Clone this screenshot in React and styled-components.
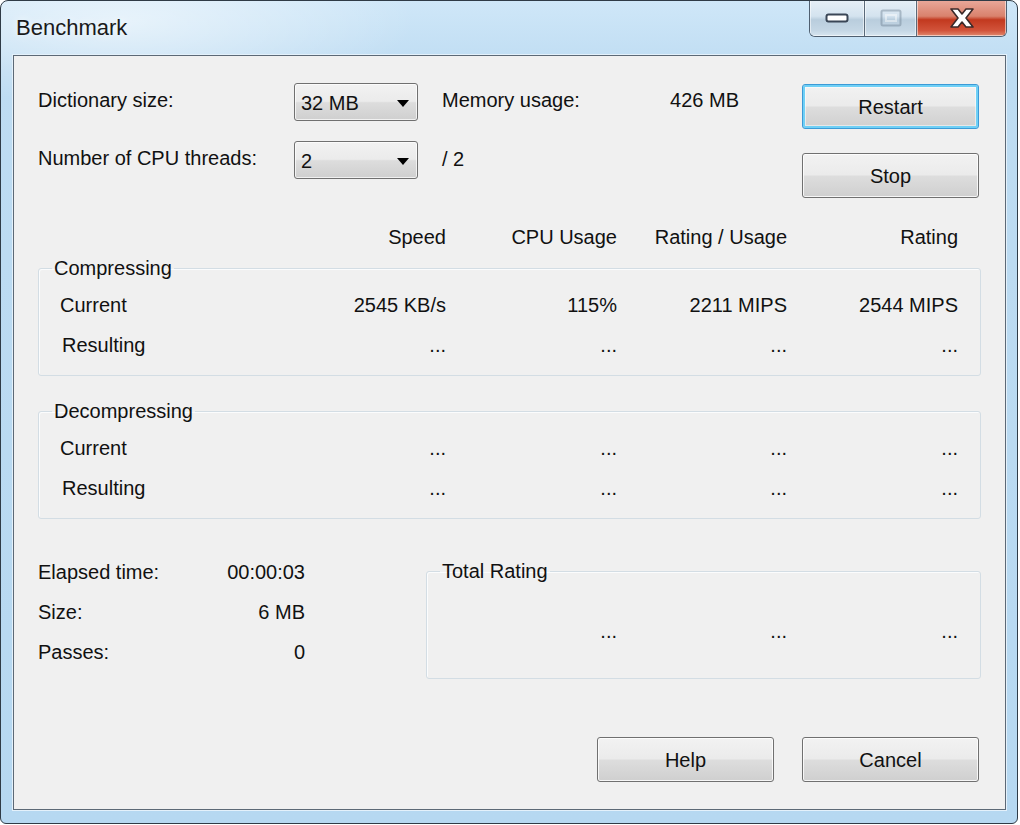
import React from 'react'
import styled, { createGlobalStyle, css } from 'styled-components'

const GlobalStyle = createGlobalStyle`
  html, body {
    margin: 0;
    padding: 0;
    background: #ffffff;
  }
  body {
    font-family: "Liberation Sans", Arial, sans-serif;
    font-size: 20px;
    color: #111;
  }
`

const Window = styled.div`
  box-sizing: border-box;
  width: 1018px;
  height: 824px;
  border: 1px solid #2f3b46;
  border-radius: 8px 8px 6px 6px;
  background:
    radial-gradient(ellipse 420px 120px at 120px 20px, rgba(255,255,255,0.55), rgba(255,255,255,0) 70%),
    linear-gradient(to bottom, #cfe7f8 0, #bedcf2 70px, #b6d8f1 100%);
  display: flex;
  flex-direction: column;
  padding: 0 11px 13px 12px;
  overflow: hidden;
`

const TitleBar = styled.div`
  height: 54px;
  display: flex;
  align-items: flex-start;
  flex-shrink: 0;
`

const Title = styled.div`
  font-size: 22px;
  line-height: 26px;
  margin-top: 14px;
  margin-left: 3px;
  color: #1a1a1a;
  text-shadow: 0 0 8px rgba(255,255,255,0.9);
`

const CaptionGroup = styled.div`
  margin-left: auto;
  margin-right: -1px;
  margin-top: -1px;
  display: flex;
  height: 36px;
  border: 1px solid #4f5f70;
  border-top: none;
  border-radius: 0 0 6px 6px;
  overflow: hidden;
`

const CaptionButton = styled.div`
  width: ${p => p.$w}px;
  display: flex;
  align-items: center;
  justify-content: center;
  border-left: ${p => (p.$first ? 'none' : '1px solid #5a6a7a')};
  box-shadow: inset 0 0 0 1px rgba(255,255,255,0.55);
  ${p => p.$close
    ? css`
      background: linear-gradient(to bottom, #e9a99b 0, #d9826d 45%, #c2391f 55%, #d2543b 85%, #e08a6f 100%);
    `
    : css`
      background: linear-gradient(to bottom, #e6eff7 0, #d4e3ef 45%, #b9cddd 55%, #c5d7e5 85%, #d8e6f0 100%);
    `}
`

const Client = styled.div`
  flex: 1;
  box-sizing: border-box;
  background: #f0f0f0;
  border: 1px solid #5c6976;
  box-shadow: 0 0 0 1px #e4f1fb;
  padding: 27px 24px 27px 24px;
  display: flex;
  flex-direction: column;
`

const TopRow = styled.div`
  display: flex;
  align-items: flex-start;
`

const SettingsGrid = styled.div`
  display: grid;
  grid-template-columns: 256px 124px 321px;
  row-gap: 20px;
  grid-auto-rows: 38px;
  align-items: center;
`

const Label = styled.div`
  line-height: 24px;
  white-space: nowrap;
  margin-top: -4px;
`

const MemCell = styled.div`
  display: flex;
  justify-content: space-between;
  padding-left: 24px;
  line-height: 24px;
  margin-top: -4px;
`

const ThreadCell = styled.div`
  padding-left: 24px;
  line-height: 24px;
  margin-top: -3px;
`

const Combo = styled.div`
  box-sizing: border-box;
  height: 38px;
  border: 1px solid #707070;
  border-radius: 3px;
  background: linear-gradient(to bottom, #f2f2f2 0, #ebebeb 48%, #dddddd 52%, #cfcfcf 100%);
  box-shadow: inset 0 0 0 1px rgba(255,255,255,0.7);
  display: flex;
  align-items: center;
  padding: 2px 8px 0 6px;
  line-height: 24px;
`

const ComboText = styled.span`
  flex: 1;
`

const Arrow = styled.span`
  width: 0;
  height: 0;
  border-left: 6px solid transparent;
  border-right: 6px solid transparent;
  border-top: 7px solid #000;
`

const ButtonColumn = styled.div`
  margin-left: auto;
  margin-right: 2px;
  margin-top: 1px;
  display: flex;
  flex-direction: column;
  gap: 24px;
`

const Button = styled.div`
  box-sizing: border-box;
  width: 177px;
  height: 45px;
  border-radius: 3px;
  display: flex;
  align-items: center;
  justify-content: center;
  line-height: 24px;
  border: 1px solid ${p => (p.$focused ? '#3c9ad6' : '#707070')};
  background: linear-gradient(to bottom, #f2f2f2 0, #ebebeb 48%, #dddddd 52%, #cfcfcf 100%);
  box-shadow: ${p => p.$focused
    ? 'inset 0 0 0 2px #6fd0f6, inset 0 0 0 3px rgba(255,255,255,0.5)'
    : 'inset 0 0 0 1px rgba(255,255,255,0.8)'};
`

const ColumnGrid = styled.div`
  display: grid;
  grid-template-columns: ${p => p.$first}px 171px 171px 170px 171px;
  line-height: 24px;
  row-gap: 16px;
`

const HeaderRow = styled(ColumnGrid)`
  margin-top: 27px;
`

const Cell = styled.div`
  text-align: ${p => (p.$left ? 'left' : 'right')};
  white-space: nowrap;
  padding-left: ${p => p.$indent || 0}px;
`

const GroupBox = styled.fieldset`
  margin: ${p => p.$mt || 0}px 0 0 ${p => (p.$push ? 'auto' : '0')};
  padding: ${p => p.$pt}px 22px ${p => p.$pb}px 21px;
  border: 1px solid #d3dde4;
  border-radius: 3px;
  box-shadow: inset 1px 1px 0 #fbfcfd;
  min-width: 0;
  box-sizing: border-box;
  width: ${p => (p.$w ? `${p.$w}px` : 'auto')};
`

const Legend = styled.legend`
  padding: 0 2px;
  margin-left: -8px;
  line-height: 24px;
`

const BottomRow = styled.div`
  display: flex;
  align-items: flex-start;
  margin-top: 40px;
`

const StatsGrid = styled.div`
  width: 267px;
  margin-top: 1px;
  display: grid;
  grid-template-columns: 1fr auto;
  row-gap: 16px;
  line-height: 24px;
`

const TotalGrid = styled.div`
  display: grid;
  grid-template-columns: 1fr 170px 171px;
  line-height: 24px;
`

const Footer = styled.div`
  margin-top: auto;
  margin-right: 2px;
  display: flex;
  justify-content: flex-end;
  gap: 28px;
`

const MinimizeIcon = () => (
  <svg width="24" height="12" viewBox="0 0 24 12">
    <rect x="1.5" y="2.5" width="21" height="7" rx="2" fill="#fff" stroke="#3a4656" strokeWidth="2" />
  </svg>
)

const MaximizeIcon = () => (
  <svg width="22" height="18" viewBox="0 0 22 18" style={{ opacity: 0.45 }}>
    <rect x="1.5" y="1.5" width="19" height="15" rx="1.5" fill="none" stroke="#6f8294" strokeWidth="2" />
    <rect x="6" y="6" width="10" height="6" fill="none" stroke="#fff" strokeWidth="2" />
  </svg>
)

const CloseIcon = () => (
  <svg width="28" height="22" viewBox="0 0 28 22">
    <path d="M3 2 L10 2 L14 7 L18 2 L25 2 L18 11 L25 20 L18 20 L14 15 L10 20 L3 20 L10 11 Z"
      fill="#fff" stroke="#3b2a2a" strokeWidth="1.6" strokeLinejoin="round" />
  </svg>
)

const columns = ['Speed', 'CPU Usage', 'Rating / Usage', 'Rating']

const compressing = [
  ['Current', '2545 KB/s', '115%', '2211 MIPS', '2544 MIPS'],
  ['Resulting', '...', '...', '...', '...'],
]

const decompressing = [
  ['Current', '...', '...', '...', '...'],
  ['Resulting', '...', '...', '...', '...'],
]

const stats = [
  ['Elapsed time:', '00:00:03'],
  ['Size:', '6 MB'],
  ['Passes:', '0'],
]

const Rows = ({ rows }) => (
  <ColumnGrid $first={215}>
    {rows.map(r => (
      <React.Fragment key={r[0]}>
        <Cell $left $indent={r[0] === 'Resulting' ? 2 : 0}>{r[0]}</Cell>
        {r.slice(1).map((v, i) => <Cell key={i}>{v}</Cell>)}
      </React.Fragment>
    ))}
  </ColumnGrid>
)

export default function App() {
  return (
    <>
      <GlobalStyle />
      <Window>
        <TitleBar>
          <Title>Benchmark</Title>
          <CaptionGroup>
            <CaptionButton $w={54} $first><MinimizeIcon /></CaptionButton>
            <CaptionButton $w={51}><MaximizeIcon /></CaptionButton>
            <CaptionButton $w={89} $close><CloseIcon /></CaptionButton>
          </CaptionGroup>
        </TitleBar>
        <Client>
          <TopRow>
            <SettingsGrid>
              <Label>Dictionary size:</Label>
              <Combo><ComboText>32 MB</ComboText><Arrow /></Combo>
              <MemCell><span>Memory usage:</span><span>426 MB</span></MemCell>
              <Label>Number of CPU threads:</Label>
              <Combo><ComboText>2</ComboText><Arrow /></Combo>
              <ThreadCell>/ 2</ThreadCell>
            </SettingsGrid>
            <ButtonColumn>
              <Button $focused>Restart</Button>
              <Button>Stop</Button>
            </ButtonColumn>
          </TopRow>

          <HeaderRow $first={237}>
            <Cell $left />
            {columns.map(c => <Cell key={c}>{c}</Cell>)}
          </HeaderRow>

          <GroupBox $mt={7} $pt={13} $pb={18}>
            <Legend>Compressing</Legend>
            <Rows rows={compressing} />
          </GroupBox>

          <GroupBox $mt={23} $pt={13} $pb={18}>
            <Legend>Decompressing</Legend>
            <Rows rows={decompressing} />
          </GroupBox>

          <BottomRow>
            <StatsGrid>
              {stats.map(([k, v]) => (
                <React.Fragment key={k}>
                  <Cell $left>{k}</Cell>
                  <Cell>{v}</Cell>
                </React.Fragment>
              ))}
            </StatsGrid>
            <GroupBox $push $w={555} $pt={36} $pb={35}>
              <Legend>Total Rating</Legend>
              <TotalGrid>
                <Cell>...</Cell>
                <Cell>...</Cell>
                <Cell>...</Cell>
              </TotalGrid>
            </GroupBox>
          </BottomRow>

          <Footer>
            <Button>Help</Button>
            <Button>Cancel</Button>
          </Footer>
        </Client>
      </Window>
    </>
  )
}
